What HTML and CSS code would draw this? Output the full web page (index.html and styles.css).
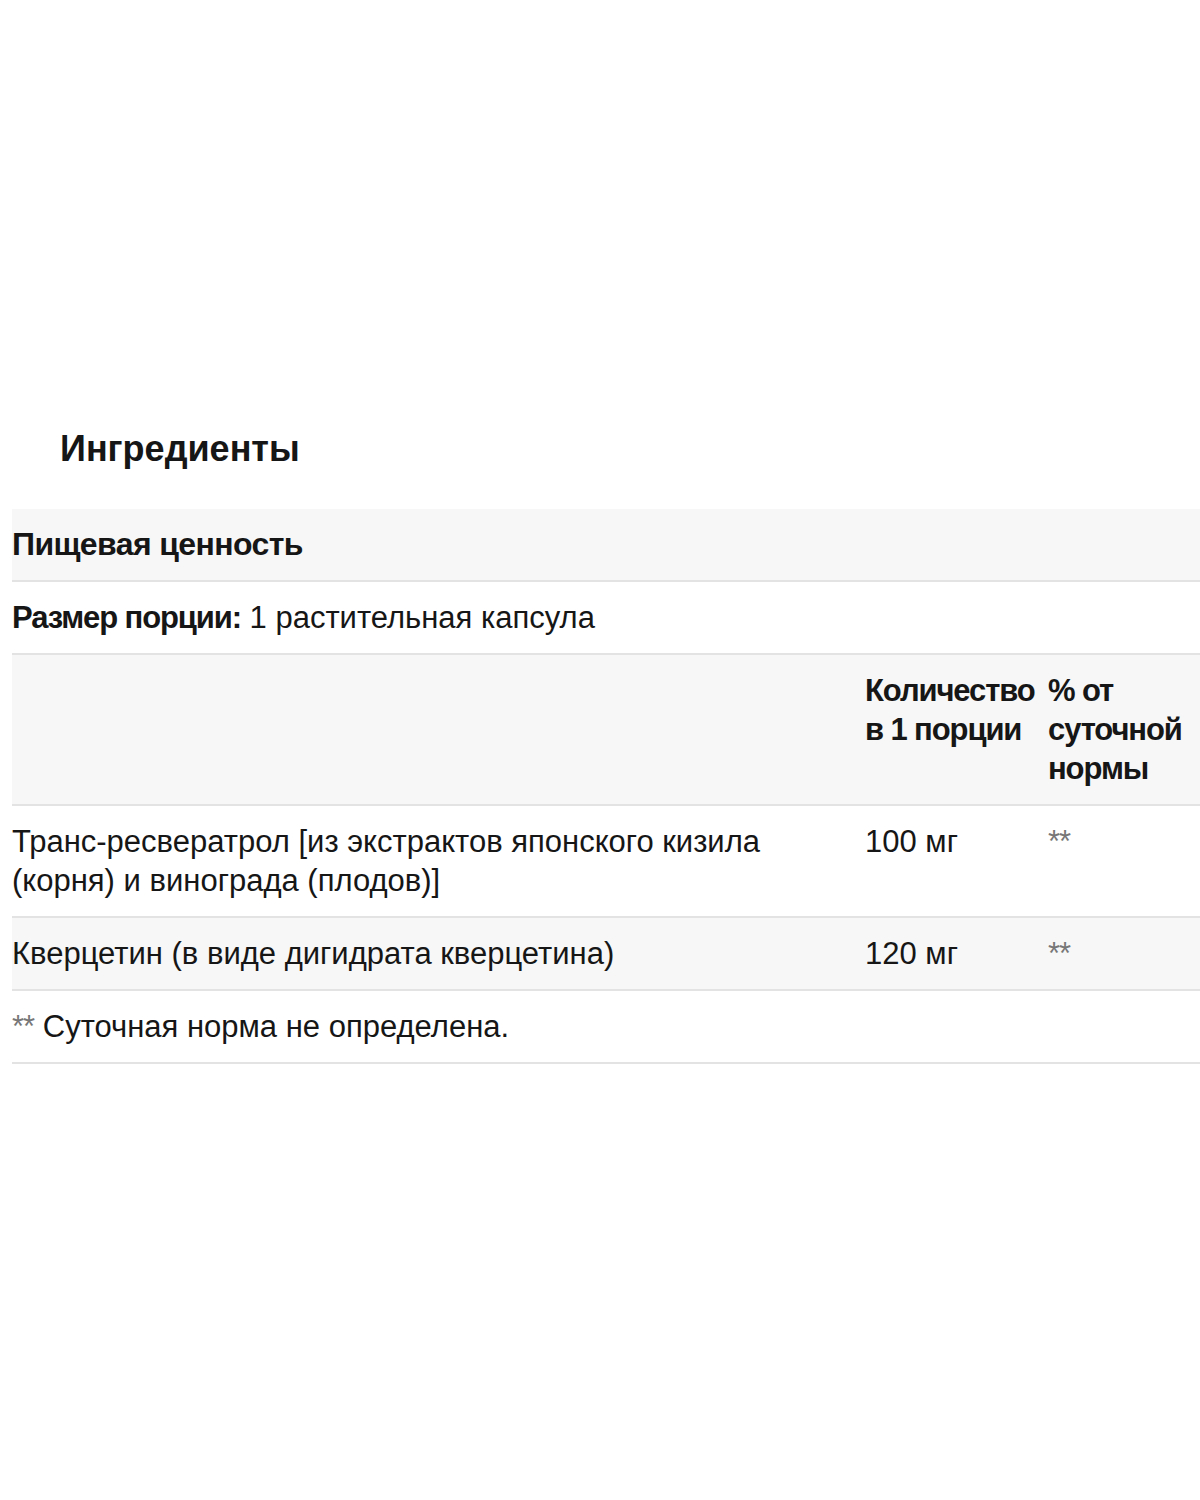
FILE: index.html
```html
<!DOCTYPE html>
<html lang="ru">
<head>
<meta charset="utf-8">
<title>Ингредиенты</title>
<link rel="stylesheet" href="styles.css">
</head>
<body>
<main class="page">
  <h2 class="title">Ингредиенты</h2>
  <table class="facts">
    <colgroup>
      <col class="c-name">
      <col class="c-amount">
      <col class="c-dv">
    </colgroup>
    <tbody>
      <tr class="shaded">
        <th colspan="3" class="caption">Пищевая ценность</th>
      </tr>
      <tr>
        <td colspan="3"><strong>Размер порции:</strong> 1 растительная капсула</td>
      </tr>
      <tr class="shaded head">
        <td></td>
        <th>Количество<br>в 1 порции</th>
        <th>% от<br>суточной<br>нормы</th>
      </tr>
      <tr>
        <td>Транс-ресвератрол [из экстрактов японского кизила<br>(корня) и винограда (плодов)]</td>
        <td>100 мг</td>
        <td><span class="stars">**</span></td>
      </tr>
      <tr class="shaded">
        <td>Кверцетин (в виде дигидрата кверцетина)</td>
        <td>120 мг</td>
        <td><span class="stars">**</span></td>
      </tr>
      <tr>
        <td colspan="3"><span class="stars">**</span> Суточная норма не определена.</td>
      </tr>
    </tbody>
  </table>
</main>
</body>
</html>
```

FILE: styles.css
```css
html, body {
  margin: 0;
  padding: 0;
  background: #ffffff;
  overflow: hidden;
}

.page {
  width: 1200px;
  height: 1500px;
  padding-top: 421px;
  box-sizing: border-box;
  font-family: "Liberation Sans", Arial, sans-serif;
  color: #161616;
}

.title {
  margin: 0 0 0 60px;
  font-size: 36px;
  font-weight: bold;
  line-height: 56px;
  letter-spacing: 0;
}

.facts {
  margin: 32px 0 0 12px;
  width: 1210px;
  border-collapse: collapse;
  table-layout: fixed;
  font-size: 31px;
  line-height: 39px;
}

.c-name { width: 853px; }
.c-amount { width: 183px; }

.facts td,
.facts th {
  padding: 16px 0;
  text-align: left;
  vertical-align: top;
  border-bottom: 2px solid #e3e3e3;
  font-weight: normal;
  letter-spacing: 0;
}

.facts th,
.facts strong {
  font-weight: bold;
  letter-spacing: -1.1px;
}

.facts .caption {
  font-size: 32px;
  letter-spacing: -0.6px;
}

.shaded {
  background: #f7f7f7;
}

.stars {
  color: #777777;
  letter-spacing: -1px;
}
```
